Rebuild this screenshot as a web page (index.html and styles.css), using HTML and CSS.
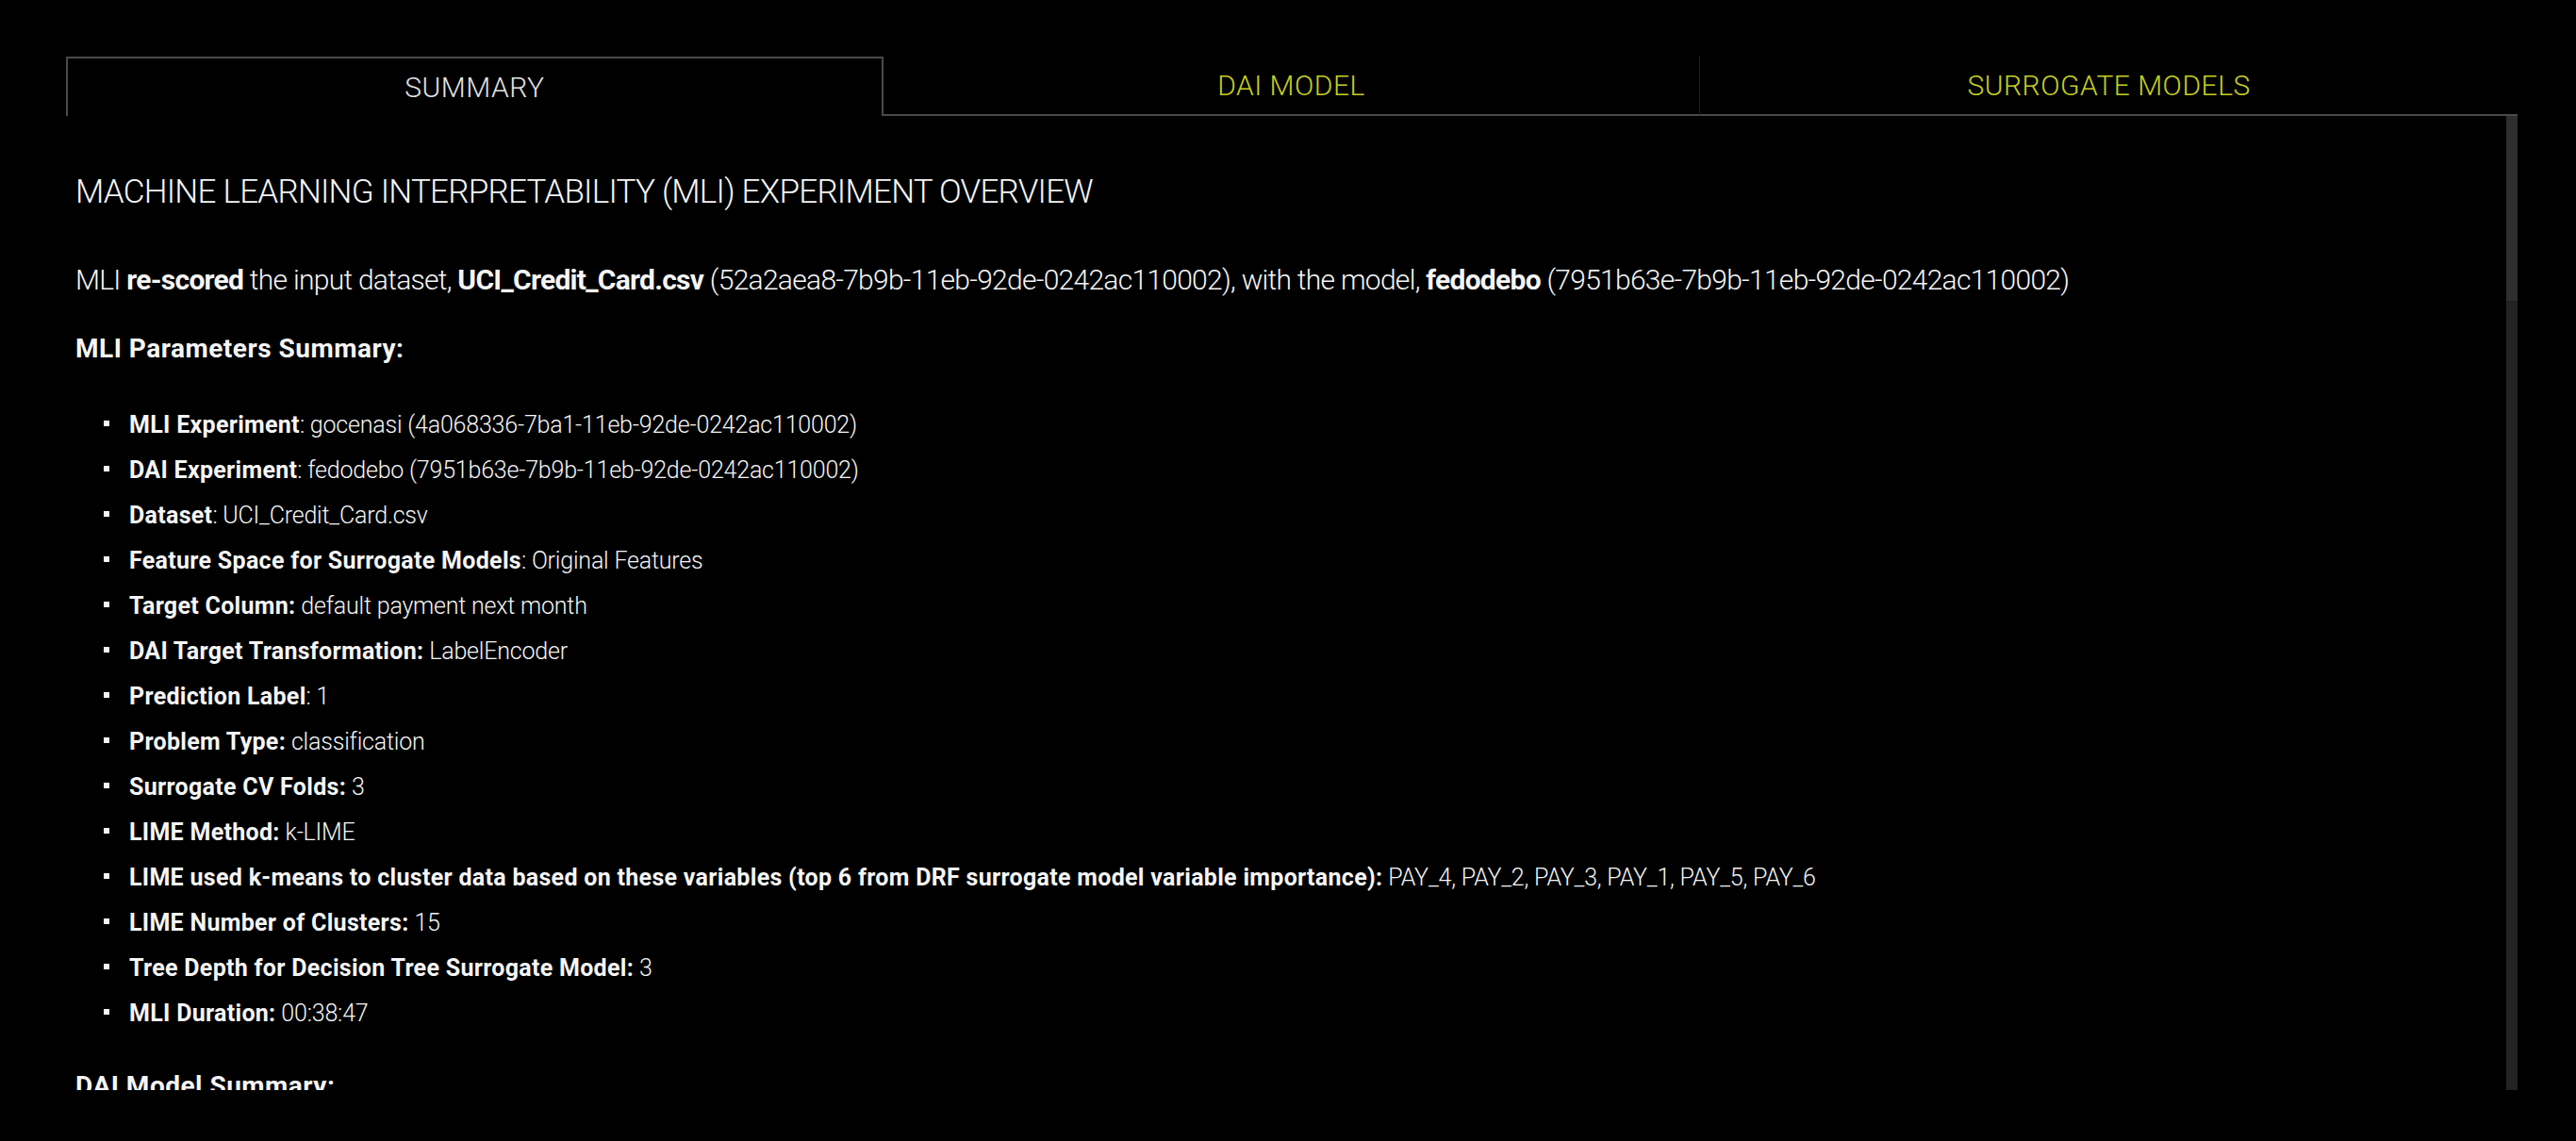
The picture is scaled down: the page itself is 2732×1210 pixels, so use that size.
FILE: index.html
```html
<!DOCTYPE html>
<html lang="en">
<head>
<meta charset="utf-8">
<title>MLI Experiment Overview</title>
<link rel="stylesheet" href="styles.css">
</head>
<body>
<div class="page">
  <nav class="tabs">
    <div class="tab tab-active">SUMMARY</div>
    <div class="tab tab-divided">DAI MODEL</div>
    <div class="tab">SURROGATE MODELS</div>
  </nav>
  <div class="panel">
    <main class="panel-body">
      <h1 class="title">MACHINE LEARNING INTERPRETABILITY (MLI) EXPERIMENT OVERVIEW</h1>
      <p class="intro">MLI <b>re-scored</b> the input dataset, <b>UCI_Credit_Card.csv</b> (52a2aea8-7b9b-11eb-92de-0242ac110002), with the model, <b>fedodebo</b> (7951b63e-7b9b-11eb-92de-0242ac110002)</p>
      <h2 class="subhead">MLI Parameters Summary:</h2>
      <ul class="params">
        <li><b>MLI Experiment</b>: gocenasi (4a068336-7ba1-11eb-92de-0242ac110002)</li>
        <li><b>DAI Experiment</b>: fedodebo (7951b63e-7b9b-11eb-92de-0242ac110002)</li>
        <li><b>Dataset</b>: UCI_Credit_Card.csv</li>
        <li><b>Feature Space for Surrogate Models</b>: Original Features</li>
        <li><b>Target Column:</b> default payment next month</li>
        <li><b>DAI Target Transformation:</b> LabelEncoder</li>
        <li><b>Prediction Label</b>: 1</li>
        <li><b>Problem Type:</b> classification</li>
        <li><b>Surrogate CV Folds:</b> 3</li>
        <li><b>LIME Method:</b> k-LIME</li>
        <li><b>LIME used k-means to cluster data based on these variables (top 6 from DRF surrogate model variable importance):</b> PAY_4, PAY_2, PAY_3, PAY_1, PAY_5, PAY_6</li>
        <li><b>LIME Number of Clusters:</b> 15</li>
        <li><b>Tree Depth for Decision Tree Surrogate Model:</b> 3</li>
        <li><b>MLI Duration:</b> 00:38:47</li>
      </ul>
      <h2 class="subhead subhead-model">DAI Model Summary:</h2>
    </main>
    <div class="scrollbar" aria-hidden="true">
      <div class="scrollbar-thumb"></div>
    </div>
  </div>
</div>
</body>
</html>
```
FILE: styles.css
```css
html, body {
  margin: 0;
  padding: 0;
  background: #000;
}

body {
  font-family: Roboto, "Liberation Sans", sans-serif;
  color: #f5f5f5;
}

.page {
  padding: 60px 62px 0 70px;
}

.tabs {
  display: grid;
  grid-template-columns: repeat(3, 1fr);
  height: 63px;
}

.tab {
  display: flex;
  align-items: center;
  justify-content: center;
  font-size: 30px;
  font-weight: 300;
  letter-spacing: 0.5px;
  color: #c6cf22;
  border-bottom: 2px solid #4a4a4a;
}

.tab-active {
  color: #e2e2e2;
  border: 2px solid #4a4a4a;
  border-bottom: none;
}

.tab-divided {
  border-right: 1px solid #1f1f1f;
}

.panel {
  display: flex;
  height: 1033px;
  overflow: hidden;
}

.panel-body {
  flex: 1;
  min-width: 0;
  padding: 56px 0 0 10px;
}

.scrollbar {
  flex: none;
  width: 12px;
  background: #232323;
}

.scrollbar-thumb {
  height: 196px;
  background: #2e2e2e;
}

.title {
  margin: 0;
  font-size: 35px;
  line-height: 50px;
  font-weight: 300;
  letter-spacing: -0.75px;
}

.intro {
  margin: 46px 0 0;
  font-size: 30px;
  line-height: 44px;
  font-weight: 300;
  letter-spacing: -0.72px;
  white-space: nowrap;
}

.intro b {
  font-weight: 700;
}

.subhead {
  margin: 31px 0 0;
  font-size: 28px;
  line-height: 40px;
  font-weight: 700;
  letter-spacing: 0.5px;
}

.params {
  list-style: none;
  margin: 37px 0 0;
  padding: 0 0 0 30px;
}

.params li {
  font-size: 25px;
  line-height: 48px;
  font-weight: 300;
  letter-spacing: -0.2px;
  white-space: nowrap;
}

.params li::before {
  content: "";
  display: inline-block;
  width: 6px;
  height: 6px;
  margin-right: 21px;
  vertical-align: 7px;
  background: #f5f5f5;
}

.params b {
  font-weight: 700;
  letter-spacing: 0.3px;
}

.subhead-model {
  margin-top: 33px;
}
```
